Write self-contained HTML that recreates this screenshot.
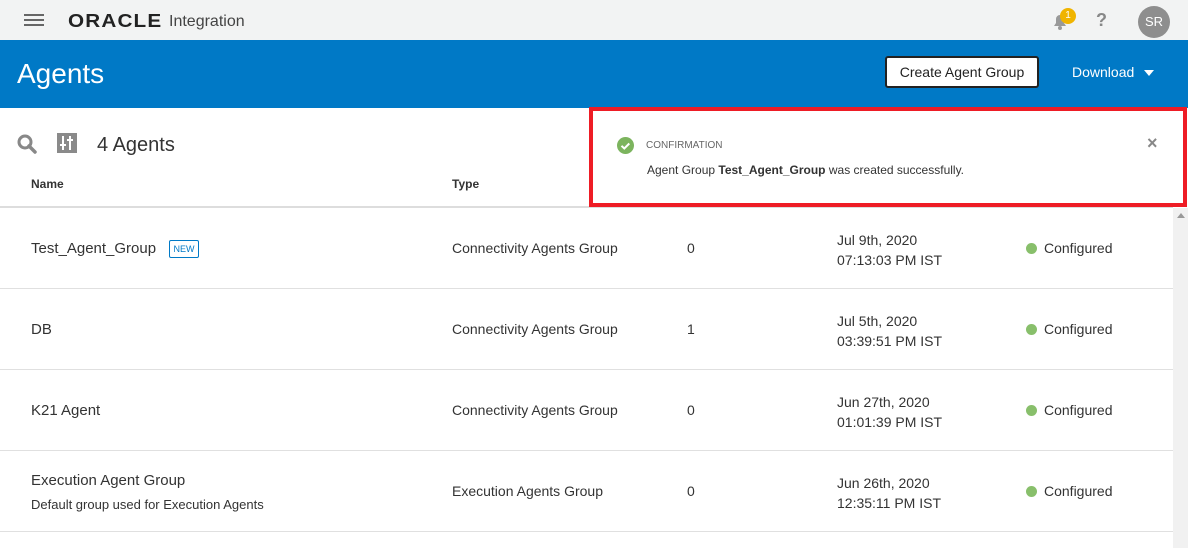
<!DOCTYPE html>
<html><head><style>
*{margin:0;padding:0;box-sizing:border-box}
body{width:1188px;height:548px;overflow:hidden;background:#fff;font-family:"Liberation Sans",sans-serif;color:#333;position:relative}
.a{position:absolute;white-space:nowrap}
.top{position:absolute;left:0;top:0;width:1188px;height:40px;background:#f2f3f3}
.blue{position:absolute;left:0;top:40px;width:1188px;height:68px;background:#0079c6}
.row{position:absolute;left:0;width:1173px;height:81px;border-bottom:1px solid #e0e0e0}
.t15{font-size:15px;color:#333}
.t14{font-size:14px;color:#333}
.dot{position:absolute;width:11px;height:11px;border-radius:50%;background:#88bf6b}
</style></head><body>
<div class="top"></div>
<div class="a" style="left:24px;top:14px;width:20px;height:2px;background:#666;box-shadow:0 5px 0 #666,0 10px 0 #666"></div>
<div class="a" style="left:68px;top:11px;font-size:18px;font-weight:bold;letter-spacing:1px;color:#222;transform:scaleX(1.15);transform-origin:left">ORACLE</div>
<div class="a" style="left:169px;top:13px;font-size:16px;color:#444">Integration</div>
<svg class="a" style="left:1050px;top:11px" width="20" height="20" viewBox="0 0 20 20"><path d="M4 15h12l-2-3V8a4 4 0 0 0-8 0v4z" fill="#999"/><circle cx="10" cy="17" r="2" fill="#999"/></svg>
<div class="a" style="left:1060px;top:8px;width:16px;height:16px;border-radius:50%;background:#f0b400;color:#fff;font-size:10px;text-align:center;line-height:16px">1</div>
<div class="a" style="left:1096px;top:10px;font-size:18px;font-weight:bold;color:#888">?</div>
<div class="a" style="left:1138px;top:6px;width:32px;height:32px;border-radius:50%;background:#8e8e8e;color:#fff;font-size:13px;text-align:center;line-height:32px">SR</div>
<div class="blue"></div>
<div class="a" style="left:17px;top:58px;font-size:28px;color:#fff">Agents</div>
<div class="a" style="left:885px;top:56px;width:154px;height:32px;background:#fff;border:2px solid #222;border-radius:3px;font-size:14px;text-align:center;line-height:28px;color:#222">Create Agent Group</div>
<div class="a" style="left:1072px;top:64px;font-size:14px;color:#fff">Download</div>
<div class="a" style="left:1144px;top:70px;border-left:5px solid transparent;border-right:5px solid transparent;border-top:6px solid #fff"></div>
<svg class="a" style="left:16px;top:133px" width="22" height="22" viewBox="0 0 22 22"><circle cx="9" cy="9" r="6" fill="none" stroke="#888" stroke-width="3"/><path d="M13 13l6 6" stroke="#888" stroke-width="3.5" stroke-linecap="round"/></svg>
<div class="a" style="left:57px;top:133px;width:20px;height:20px;background:#8a8a8a"><div class="a" style="left:5px;top:3px;width:2px;height:14px;background:#fff"></div><div class="a" style="left:12px;top:3px;width:2px;height:14px;background:#fff"></div><div class="a" style="left:3px;top:11px;width:6px;height:2px;background:#fff"></div><div class="a" style="left:10px;top:6px;width:6px;height:2px;background:#fff"></div></div>
<div class="a" style="left:97px;top:134px;font-size:20px;color:#333">4 Agents</div>
<div class="a" style="left:31px;top:177px;font-size:12px;font-weight:bold;color:#333">Name</div>
<div class="a" style="left:452px;top:177px;font-size:12px;font-weight:bold;color:#333">Type</div>
<div class="a" style="left:0;top:206px;width:1173px;height:2px;background:#ddd"></div>
<div class="a" style="left:1173px;top:208px;width:15px;height:340px;background:#f1f1f1"></div>
<div class="a" style="left:1177px;top:213px;border-left:4px solid transparent;border-right:4px solid transparent;border-bottom:5px solid #999"></div>

<div class="row" style="top:208px"></div>
<div class="a t15" style="left:31px;top:240px">Test_Agent_Group</div>
<div class="a" style="left:169px;top:240px;width:30px;height:18px;border:1px solid #0079c6;border-radius:2px;color:#0079c6;font-size:9px;text-align:center;line-height:16px">NEW</div>
<div class="a t14" style="left:452px;top:240px">Connectivity Agents Group</div>
<div class="a t14" style="left:687px;top:240px">0</div>
<div class="a t14" style="left:837px;top:230px;line-height:20px">Jul 9th, 2020<br>07:13:03 PM IST</div>
<div class="dot" style="left:1026px;top:243px"></div><div class="a t14" style="left:1044px;top:240px">Configured</div>

<div class="row" style="top:289px;height:81px"></div>
<div class="a t15" style="left:31px;top:321px">DB</div>
<div class="a t14" style="left:452px;top:321px">Connectivity Agents Group</div>
<div class="a t14" style="left:687px;top:321px">1</div>
<div class="a t14" style="left:837px;top:311px;line-height:20px">Jul 5th, 2020<br>03:39:51 PM IST</div>
<div class="dot" style="left:1026px;top:324px"></div><div class="a t14" style="left:1044px;top:321px">Configured</div>

<div class="row" style="top:370px"></div>
<div class="a t15" style="left:31px;top:402px">K21 Agent</div>
<div class="a t14" style="left:452px;top:402px">Connectivity Agents Group</div>
<div class="a t14" style="left:687px;top:402px">0</div>
<div class="a t14" style="left:837px;top:392px;line-height:20px">Jun 27th, 2020<br>01:01:39 PM IST</div>
<div class="dot" style="left:1026px;top:405px"></div><div class="a t14" style="left:1044px;top:402px">Configured</div>

<div class="row" style="top:451px"></div>
<div class="a t15" style="left:31px;top:472px">Execution Agent Group</div>
<div class="a" style="left:31px;top:497px;font-size:13px;color:#333">Default group used for Execution Agents</div>
<div class="a t14" style="left:452px;top:483px">Execution Agents Group</div>
<div class="a t14" style="left:687px;top:483px">0</div>
<div class="a t14" style="left:837px;top:473px;line-height:20px">Jun 26th, 2020<br>12:35:11 PM IST</div>
<div class="dot" style="left:1026px;top:486px"></div><div class="a t14" style="left:1044px;top:483px">Configured</div>

<div class="a" style="left:589px;top:107px;width:598px;height:100px;background:#fff;border:4px solid #ee1c25"></div>
<svg class="a" style="left:617px;top:137px" width="17" height="17" viewBox="0 0 17 17"><circle cx="8.5" cy="8.5" r="8.5" fill="#7cb45e"/><path d="M4.5 8.8l2.8 2.7 5-5" fill="none" stroke="#fff" stroke-width="2"/></svg>
<div class="a" style="left:646px;top:140px;font-size:10px;color:#666">CONFIRMATION</div>
<div class="a" style="left:647px;top:163px;font-size:12px;color:#333">Agent Group <b>Test_Agent_Group</b> was created successfully.</div>
<div class="a" style="left:1147px;top:133px;font-size:18px;color:#888;font-weight:bold">×</div>
</body></html>
